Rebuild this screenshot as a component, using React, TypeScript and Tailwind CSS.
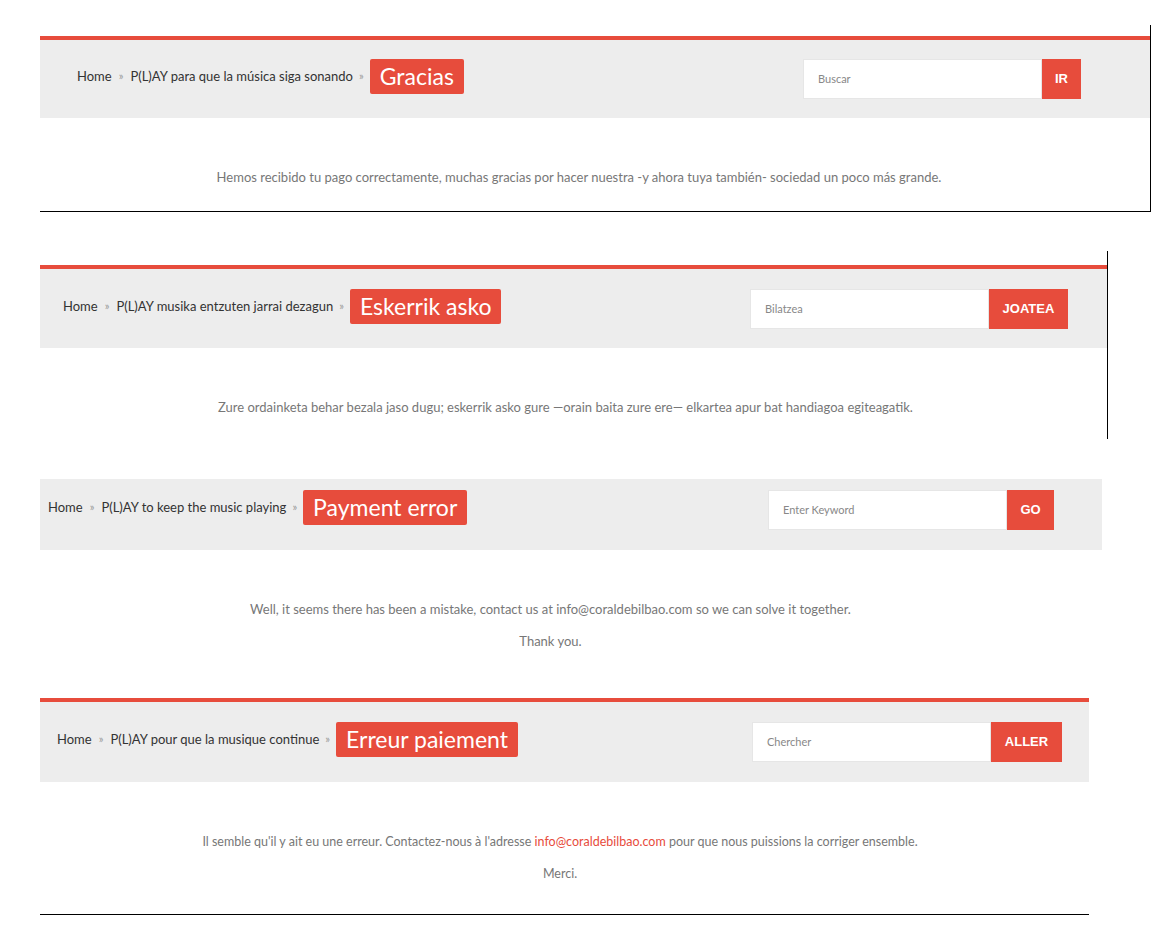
import React from "react";

const RED = "bg-[#e74c3c]";

interface BarProps {
  crumb: string;
  title: string;
  placeholder: string;
  button: string;
  barClass: string;
  buttonClass: string;
}

function Bar({ crumb, title, placeholder, button, barClass, buttonClass }: BarProps) {
  return (
    <div className={`flex items-start justify-between bg-[#ededed] ${barClass}`}>
      <div className="flex h-[35px] items-center text-[13px] text-[#333]">
        <span>Home</span>
        <span className="mx-[7px] text-[11px] text-[#999]">»</span>
        <span>{crumb}</span>
        <span className="ml-[6px] mr-[6px] text-[11px] text-[#999]">»</span>
        <span className={`rounded-[2px] ${RED} px-[10px] text-[23px] leading-[35px] text-white`}>
          {title}
        </span>
      </div>
      <div className="flex h-[40px]">
        <div className="flex w-[239px] items-center border border-[#e6e6e6] bg-white pl-[14px] text-[11px] text-[#888]">
          {placeholder}
        </div>
        <button
          className={`flex items-center justify-center ${RED} font-['Liberation_Sans',Arial,sans-serif] text-[13px] font-bold text-white ${buttonClass}`}
        >
          {button}
        </button>
      </div>
    </div>
  );
}

export default function App() {
  return (
    <div className="min-h-[938px] bg-white pb-[20px] pt-[25px] font-['Lato','Open_Sans',sans-serif]">
      {/* Spanish */}
      <div className="ml-[40px] w-[1111px] border-b border-r border-black pt-[11px]">
        <div className={`h-[4px] ${RED}`} />
        <Bar
          crumb="P(L)AY para que la música siga sonando"
          title="Gracias"
          placeholder="Buscar"
          button="IR"
          barClass="h-[78px] pl-[37px] pr-[69px] pt-[19px]"
          buttonClass="w-[39px]"
        />
        <div className="flex h-[93px] items-start justify-center pr-[32px] pt-[50px] text-[13px] text-[#777]">
          Hemos recibido tu pago correctamente, muchas gracias por hacer nuestra -y ahora tuya también- sociedad un poco más grande.
        </div>
      </div>

      {/* Basque */}
      <div className="ml-[40px] mt-[39px] w-[1068px] border-r border-black pt-[14px]">
        <div className={`h-[4px] ${RED}`} />
        <Bar
          crumb="P(L)AY musika entzuten jarrai dezagun"
          title="Eskerrik asko"
          placeholder="Bilatzea"
          button="JOATEA"
          barClass="h-[79px] pl-[23px] pr-[39px] pt-[20px]"
          buttonClass="w-[79px]"
        />
        <div className="flex h-[91px] items-start justify-center pr-[16px] pt-[50px] text-[13px] text-[#777]">
          Zure ordainketa behar bezala jaso dugu; eskerrik asko gure —orain baita zure ere— elkartea apur bat handiagoa egiteagatik.
        </div>
      </div>

      {/* English */}
      <div className="ml-[40px] mt-[40px] w-[1062px]">
        <Bar
          crumb="P(L)AY to keep the music playing"
          title="Payment error"
          placeholder="Enter Keyword"
          button="GO"
          barClass="h-[71px] pl-[8px] pr-[48px] pt-[11px]"
          buttonClass="w-[47px]"
        />
        <div className="flex flex-col items-center pr-[41px] pt-[50px] text-[13px] text-[#777]">
          <p>Well, it seems there has been a mistake, contact us at info@coraldebilbao.com so we can solve it together.</p>
          <p className="mt-[12px]">Thank you.</p>
        </div>
      </div>

      {/* French */}
      <div className="ml-[40px] mt-[47px] w-[1049px] border-b border-black">
        <div className={`h-[4px] ${RED}`} />
        <Bar
          crumb="P(L)AY pour que la musique continue"
          title="Erreur paiement"
          placeholder="Chercher"
          button="ALLER"
          barClass="h-[80px] pl-[17px] pr-[27px] pt-[20px]"
          buttonClass="w-[71px]"
        />
        <div className="flex h-[132px] flex-col items-center pr-[9px] pt-[51px] text-[12.5px] text-[#777]">
          <p>
            Il semble qu'il y ait eu une erreur. Contactez-nous à l'adresse{" "}
            <span className="text-[#e74c3c]">info@coraldebilbao.com</span> pour que nous puissions la corriger ensemble.
          </p>
          <p className="mt-[13px]">Merci.</p>
        </div>
      </div>
    </div>
  );
}
